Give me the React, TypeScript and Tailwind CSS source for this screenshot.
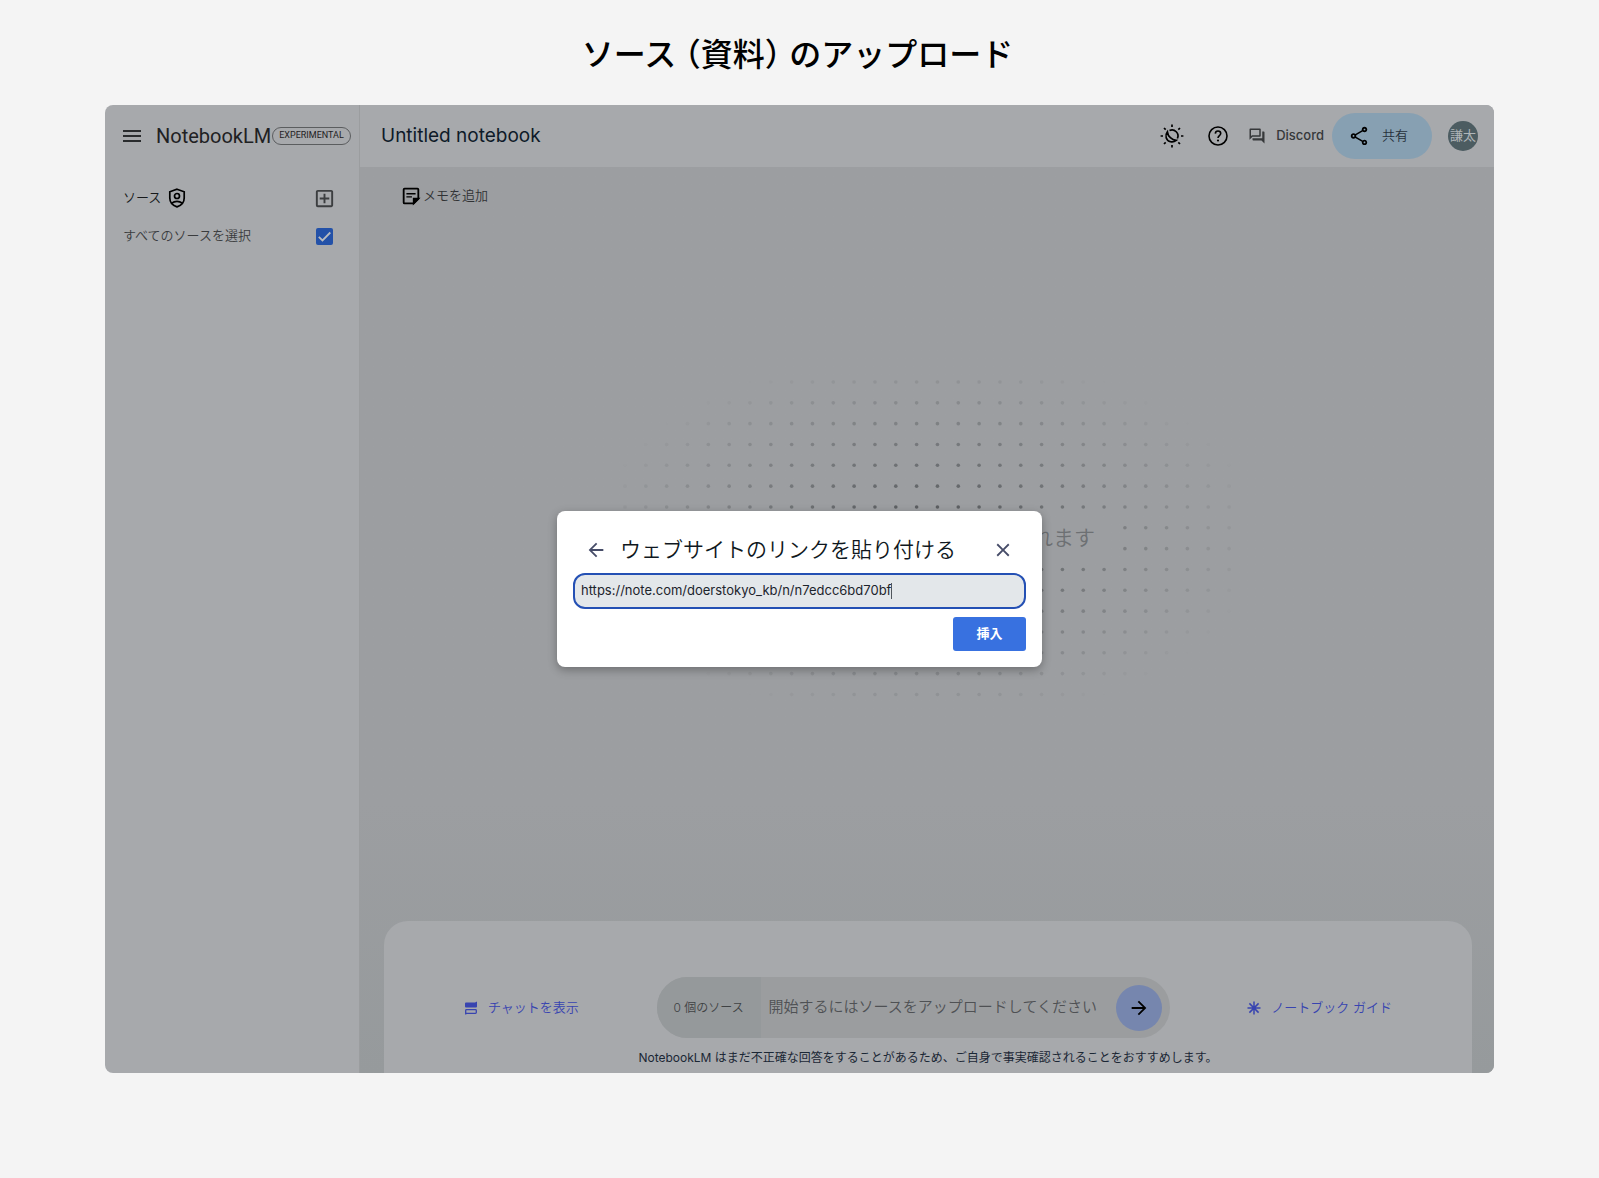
import { useState, type FormEvent } from 'react';
import {
  MdArrowBack,
  MdArrowForward,
  MdClose,
  MdMenu,
  MdOutlineAddBox,
  MdOutlineForum,
  MdOutlineShare,
} from 'react-icons/md';

const DOT_GAP = 20.83;
const DOT_COLS = 30;
const DOT_ROWS = 16;

function DotField() {
  const dots = [];
  for (let row = 0; row < DOT_ROWS; row++) {
    for (let col = 0; col < DOT_COLS; col++) {
      const x = 5 + col * DOT_GAP;
      const y = 5 + row * DOT_GAP;
      const dist = Math.hypot((x - 307) / 335, (y - 161) / 185);
      if (dist < 1) {
        dots.push(<circle key={`${row}-${col}`} cx={x} cy={y} r={1.8} opacity={(1 - dist) * 0.8} />);
      }
    }
  }
  return (
    <svg className="h-[322px] w-[614px] fill-[#3c4043]" viewBox="0 0 614 322" aria-hidden="true">
      {dots}
    </svg>
  );
}

function ShieldIcon() {
  return (
    <svg className="h-6 w-6" viewBox="0 0 24 24" fill="none" stroke="currentColor" strokeWidth="1.700" aria-hidden="true">
      <path d="M12 3.200 19.200 5.800V12c0 4.200-2.800 7.400-7.200 8.900-4.400-1.500-7.200-4.700-7.200-8.900V5.800z" />
      <circle cx="12" cy="10" r="2.500" />
      <path d="M6.800 17.200c1.500-1.300 3.300-1.900 5.200-1.900s3.700.6 5.200 1.900" />
    </svg>
  );
}

function ThemeIcon() {
  return (
    <svg className="h-6 w-6" viewBox="0 0 24 24" fill="none" stroke="currentColor" strokeWidth="1.700" aria-hidden="true">
      <path d="M12 .6v2.400M12 21v2.400M.6 12H3M21 12h2.400M4 4l1.700 1.700M18.300 18.300 20 20M4 20l1.700-1.700M18.300 5.700 20 4" />
      <path d="M9.500 6.500A6 6 0 0 1 17.400 14.500" />
      <path d="M7.400 7.800C4.500 11.500 6 16.500 10.500 17.700c2.200.5 4.100 0 5.700-1.300C11.900 15.900 7.900 12.600 7.400 7.800z" />
    </svg>
  );
}

function HelpIcon() {
  return (
    <svg className="h-6 w-6" viewBox="0 0 24 24" fill="none" stroke="currentColor" strokeWidth="1.600" aria-hidden="true">
      <circle cx="12" cy="12" r="9" />
      <path d="M9.300 9.600C9.400 8 10.500 7 12 7s2.700 1 2.700 2.500c0 2-2.700 2.300-2.700 4.500" />
      <circle cx="12" cy="16.500" r="1.100" fill="currentColor" stroke="none" />
    </svg>
  );
}

function NoteIcon() {
  return (
    <svg className="h-[22px] w-[22px]" viewBox="0 0 24 24" fill="none" stroke="currentColor" strokeWidth="2" aria-hidden="true">
      <path d="M15 20H5a1 1 0 0 1-1-1V5a1 1 0 0 1 1-1h14a1 1 0 0 1 1 1v10z" />
      <path d="M15 20v-5h5z" fill="currentColor" />
      <path d="M7 9.500h10M7 13h6" strokeWidth="1.500" />
    </svg>
  );
}

function ChatIcon() {
  return (
    <svg className="h-[14px] w-[14px]" viewBox="0 0 14 14" aria-hidden="true">
      <path d="M1 2.500Q1 1.500 2 1.500H11L13 .5V5.500Q13 6.500 12 6.500H2Q1 6.500 1 5.500z" fill="currentColor" />
      <path d="M1.700 13.500V9.500Q1.700 8.700 2.500 8.700H11.500Q12.300 8.700 12.300 9.500V11.500Q12.300 12.300 11.500 12.300H1.700" fill="none" stroke="currentColor" strokeWidth="1.300" />
    </svg>
  );
}

function GuideIcon() {
  return (
    <svg className="h-[14px] w-[14px]" viewBox="0 0 14 14" fill="none" stroke="currentColor" strokeWidth="1.500" aria-hidden="true">
      <path d="M7 .5v13M.5 7h13M2.400 2.400l9.200 9.200M11.600 2.400l-9.200 9.200" />
    </svg>
  );
}

function Sidebar() {
  const [allSelected, setAllSelected] = useState(true);

  return (
    <aside className="w-[255px] shrink-0 border-r border-[#9b9d9f] bg-[#a7a9ac]">
      <div className="flex h-[62px] items-center pl-[15px]">
        <button type="button" aria-label="メニュー" className="text-[#2a2c2e]">
          <MdMenu className="h-6 w-6" />
        </button>
        <span className="ml-3 font-['Roboto'] text-xl font-normal text-[#1f2123]">NotebookLM</span>
        <span className="ml-px flex h-[18px] items-center rounded-full border border-[#5b5d5f] px-[6px] font-['Roboto'] text-[9px] font-normal text-[#1f2123]">
          EXPERIMENTAL
        </span>
      </div>
      <div className="mt-[13px] flex h-9 items-center px-[18px] text-[13px] text-[#17191b]">
        <span>ソース</span>
        <span className="ml-1 text-black"><ShieldIcon /></span>
        <button type="button" aria-label="ソースを追加" className="ml-auto mr-[5px] text-[#3c3e40]">
          <MdOutlineAddBox className="h-[23px] w-[23px]" />
        </button>
      </div>
      <label className="mt-[2px] flex h-9 items-center justify-between pl-[18px] pr-[26px] text-[13px] text-[#3a3c3e]">
        すべてのソースを選択
        <span className="relative h-[17px] w-[17px]">
          <input
            type="checkbox"
            checked={allSelected}
            onChange={(e) => setAllSelected(e.target.checked)}
            className="block h-full w-full appearance-none rounded-[2px] border-2 border-[#46484a] checked:border-0 checked:bg-[#2351a8]"
          />
          {allSelected && (
            <svg className="pointer-events-none absolute inset-0 h-full w-full" viewBox="0 0 17 17" fill="none" stroke="#b9bcc0" strokeWidth="1.800" aria-hidden="true">
              <path d="M2.800 8.800l3.700 3.700L14.300 4.500" />
            </svg>
          )}
        </span>
      </label>
    </aside>
  );
}

function Header() {
  return (
    <header className="flex h-[62px] items-center bg-[#a7a9ac] pl-[21px] pr-4">
      <h2 className="text-[19px] font-normal text-[#0e1a28]">Untitled notebook</h2>
      <div className="ml-auto flex items-center">
        <button type="button" aria-label="テーマ" className="text-black"><ThemeIcon /></button>
        <button type="button" aria-label="ヘルプ" className="ml-[22px] text-black"><HelpIcon /></button>
        <a href="#discord" className="ml-[18px] flex items-center gap-[10px] text-[13px] font-medium text-[#36383a]">
          <MdOutlineForum className="h-[18px] w-[18px]" />
          Discord
        </a>
        <button type="button" className="ml-2 flex h-[46px] w-[100px] items-center rounded-full bg-[#87a0b2] pl-4 text-[13px] text-[#26303a]">
          <MdOutlineShare className="mr-3 h-[22px] w-[22px] text-black" />
          共有
        </button>
        <button type="button" aria-label="アカウント" className="ml-4 h-[30px] w-[30px] rounded-full bg-[#4c5c61] text-[13px] font-normal text-[#b0b6b9]">
          謙太
        </button>
      </div>
    </header>
  );
}

function ChatPanel() {
  return (
    <div className="ml-6 mr-[22px] rounded-t-3xl bg-[#a7a9ac] pt-14">
      <div className="flex items-center justify-between px-20">
        <button type="button" className="flex items-center gap-[10px] text-[13px] text-[#3844b0]">
          <ChatIcon />
          チャットを表示
        </button>
        <div className="flex h-[61px] w-[513px] overflow-hidden rounded-full bg-[#9b9d9f]">
          <span className="flex w-[104px] shrink-0 items-center justify-center bg-[#95999b] text-xs text-[#3f4244]">
            0 個のソース
          </span>
          <input
            type="text"
            aria-label="質問"
            placeholder="開始するにはソースをアップロードしてください"
            className="ml-2 min-w-0 flex-1 bg-transparent text-[15px] text-[#1f2123] outline-none placeholder:text-[#4f5154]"
          />
          <button type="button" aria-label="送信" className="ml-4 mr-2 flex h-[46px] w-[46px] shrink-0 items-center justify-center self-center rounded-full bg-[#7686ae] text-black">
            <MdArrowForward className="h-[22px] w-[22px]" />
          </button>
        </div>
        <button type="button" className="flex items-center gap-[10px] text-[13px] text-[#3844b0]">
          <GuideIcon />
          ノートブック ガイド
        </button>
      </div>
      <p className="pb-[7px] pt-3 text-center text-xs font-normal text-[#1b2735]">
        NotebookLM はまだ不正確な回答をすることがあるため、ご自身で事実確認されることをおすすめします。
      </p>
    </div>
  );
}

function LinkDialog() {
  const [url, setUrl] = useState('https://note.com/doerstokyo_kb/n/n7edcc6bd70bf');

  const handleSubmit = (e: FormEvent) => {
    e.preventDefault();
  };

  return (
    <div className="absolute inset-0 flex items-center justify-center">
      <form
        role="dialog"
        aria-labelledby="dialog-title"
        onSubmit={handleSubmit}
        className="w-[485px] rounded-lg bg-white p-4 shadow-[0_3px_10px_rgba(0,0,0,0.3)]"
      >
        <div className="flex h-[46px] items-center px-3">
          <button type="button" aria-label="戻る" className="text-[#464c68]">
            <MdArrowBack className="h-[22px] w-[22px]" />
          </button>
          <h2 id="dialog-title" className="ml-[13px] text-[21px] font-[350] text-[#0f1720]">ウェブサイトのリンクを貼り付ける</h2>
          <button type="button" aria-label="閉じる" className="ml-auto text-[#464c68]">
            <MdClose className="h-[22px] w-[22px]" />
          </button>
        </div>
        <div className="flex h-9 items-center rounded-xl border-2 border-[#2450b4] bg-[#e3e7ea] px-[6px]">
          <input
            type="text"
            aria-label="URL"
            value={url}
            onChange={(e) => setUrl(e.target.value)}
            className="field-sizing-content max-w-full bg-transparent text-[13px] font-normal text-[#1c242c] outline-none"
          />
          <span className="h-4 w-px bg-[#50565c]" />
        </div>
        <div className="mt-2 flex justify-end">
          <button type="submit" className="h-[34px] w-[73px] rounded-[3px] bg-[#3871e0] text-[13px] font-bold text-white">
            挿入
          </button>
        </div>
      </form>
    </div>
  );
}

export default function App() {
  return (
    <div className="flex min-h-screen flex-col bg-[#f4f4f4] px-[105px] pb-[105px] font-['Inter','Noto_Sans_CJK_JP',sans-serif] font-[350]">
      <h1 className="flex h-[105px] items-center justify-center whitespace-nowrap pr-1 pt-1 text-[32px] font-medium text-black [font-feature-settings:'halt']">
        ソース （資料） のアップロード
      </h1>
      <div className="relative flex flex-1 overflow-hidden rounded-lg">
        <Sidebar />
        <div className="flex min-w-0 flex-1 flex-col bg-[#9c9ea1]">
          <Header />
          <main className="flex flex-1 flex-col justify-between bg-linear-to-b from-[#9c9ea1] from-70% to-[#969a9c]">
            <div className="flex h-[58px] items-center pl-10 text-[13px] text-[#303234]">
              <button type="button" className="flex items-center">
                <span className="mr-px text-black"><NoteIcon /></span>
                メモを追加
              </button>
            </div>
            <div className="grid place-items-center pb-[70px] *:[grid-area:1/1]">
              <DotField />
              <p className="bg-[#9c9ea1] px-4 py-1 text-[21px] text-[#6d7073]">保存したメモがここに表示されます</p>
            </div>
            <ChatPanel />
          </main>
        </div>
        <LinkDialog />
      </div>
    </div>
  );
}
